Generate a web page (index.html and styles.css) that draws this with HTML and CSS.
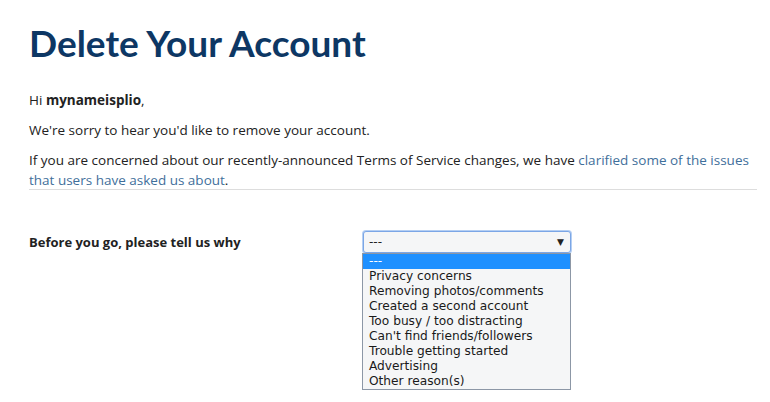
FILE: index.html
```html
<!DOCTYPE html>
<html lang="en">
<head>
    <meta charset="UTF-8">
    <title>Delete Your Account</title>
    <link rel="stylesheet" href="styles.css">
</head>
<body>
    <div class="page">
        <h1>Delete Your Account</h1>
        <p>Hi <strong>mynameisplio</strong>,</p>
        <p>We're sorry to hear you'd like to remove your account.</p>
        <p class="last">If you are concerned about our recently-announced Terms of Service changes, we have <a href="#">clarified some of the issues that users have asked us about</a>.</p>
        <hr>
        <div class="reason-row">
            <label class="reason-label">Before you go, please tell us why</label>
            <div class="reason-select">
                <div class="select-box">
                    <span>---</span>
                    <span class="arrow">&#9660;</span>
                </div>
                <ul class="select-list">
                    <li class="selected">---</li>
                    <li>Privacy concerns</li>
                    <li>Removing photos/comments</li>
                    <li>Created a second account</li>
                    <li>Too busy / too distracting</li>
                    <li>Can't find friends/followers</li>
                    <li>Trouble getting started</li>
                    <li>Advertising</li>
                    <li>Other reason(s)</li>
                </ul>
            </div>
        </div>
    </div>
</body>
</html>
```

FILE: styles.css
```css
body {
    margin: 0;
    background-color: #fff;
    font-family: "Open Sans", Lato, sans-serif;
    font-size: 13.5px;
    color: #222;
}
.page {
    padding: 20px 13px 0 29px;
}
h1 {
    margin: 0 0 24px;
    font-family: Lato, sans-serif;
    font-size: 37px;
    font-weight: 700;
    color: #0d3764;
    line-height: 46px;
}
p {
    margin: 0 0 10px;
    line-height: 20px;
}
p.last {
    margin-bottom: 0;
}
strong {
    font-weight: 700;
}
a {
    color: #3f6f9b;
    text-decoration: none;
}
hr {
    border: none;
    border-top: 1px solid #ddd;
    margin: -1px 0 0;
}
.reason-row {
    display: flex;
    margin-top: 41px;
}
.reason-label {
    width: 334px;
    font-size: 13px;
    font-weight: 700;
    padding-top: 2px;
}
.reason-select {
    width: 208px;
}
.select-box {
    display: flex;
    justify-content: space-between;
    align-items: center;
    height: 20px;
    padding: 0 6px 0 5px;
    border: 1px solid #7ba6e6;
    border-radius: 3px;
    box-shadow: 0 0 0 1px #b5cff3;
    background-color: #f5f6f7;
    font-family: "DejaVu Sans", sans-serif;
    font-size: 12px;
    color: #222;
}
.arrow {
    font-size: 9px;
}
.select-list {
    list-style: none;
    margin: 0 0 0 -1px;
    padding: 0;
    border: 1px solid #8c97a6;
    background-color: #f5f6f7;
    font-family: "DejaVu Sans", sans-serif;
    font-size: 12.2px;
    color: #1a1a1a;
}
.select-list li {
    height: 15px;
    line-height: 15px;
    padding-left: 6px;
}
.select-list li.selected {
    background-color: #1e90ff;
    color: #fff;
}
```
